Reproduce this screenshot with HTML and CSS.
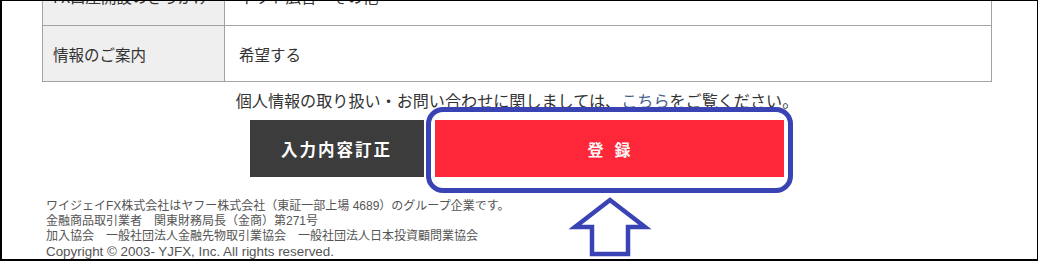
FILE: index.html
```html
<!DOCTYPE html>
<html lang="ja">
<head>
<meta charset="utf-8">
<title>確認画面</title>
<link rel="stylesheet" href="styles.css">
</head>
<body>
<div class="frame">
  <div class="content">
    <div class="info">
      <div class="row row-cut">
        <div class="label">FX口座開設のきっかけ</div>
        <div class="value">ネット広告・その他</div>
      </div>
      <div class="row">
        <div class="label">情報のご案内</div>
        <div class="value">希望する</div>
      </div>
    </div>
    <p class="notice">個人情報の取り扱い・お問い合わせに関しましては、<a href="#" class="link">こちら</a>をご覧ください。</p>
    <div class="buttons">
      <button class="btn btn-back">入力内容訂正</button>
      <div class="submit-wrap">
        <button class="btn btn-submit">登録</button>
        <span class="highlight"></span>
      </div>
    </div>
  </div>
  <div class="footer">
    <p>ワイジェイFX株式会社はヤフー株式会社（東証一部上場 4689）のグループ企業です。</p>
    <p>金融商品取引業者　関東財務局長（金商）第271号</p>
    <p>加入協会　一般社団法人金融先物取引業協会　一般社団法人日本投資顧問業協会</p>
    <p class="copy">Copyright © 2003- YJFX, Inc. All rights reserved.</p>
  </div>
  <svg class="arrow" width="90" height="66" viewBox="0 0 90 66" aria-hidden="true">
    <polygon points="45,3 10,30 27,30 27,57 63,57 63,30 80,30" fill="none" stroke="#3a43b4" stroke-width="4.5" stroke-linejoin="miter"/>
  </svg>
</div>
</body>
</html>
```
FILE: styles.css
```css
html, body {
  margin: 0;
  padding: 0;
  background: #ffffff;
}
body {
  font-family: "Noto Sans CJK JP", "Liberation Sans", sans-serif;
  color: #333333;
}
.frame {
  position: relative;
  box-sizing: border-box;
  width: 1038px;
  height: 261px;
  border-top: 1px solid #000;
  border-left: 2px solid #000;
  border-right: 1px solid #000;
  border-bottom: 2px solid #000;
  overflow: hidden;
  background: #fff;
}
.content {
  width: 950px;
  margin-left: 40px;
}
.info {
  margin-top: -32px;
  border-left: 1px solid #a3a3a3;
  border-right: 1px solid #a3a3a3;
  border-bottom: 1px solid #a3a3a3;
}
.row {
  display: grid;
  grid-template-columns: 182px 1fr;
  height: 56px;
  box-sizing: border-box;
  border-top: 1px solid #a3a3a3;
}
.label {
  background: #efefef;
  border-right: 1px solid #a3a3a3;
  padding-left: 10px;
  display: flex;
  align-items: center;
  font-size: 15.5px;
  line-height: 20px;
}
.value {
  padding-left: 14px;
  display: flex;
  align-items: center;
  font-size: 15.5px;
  line-height: 20px;
}
.row-cut .label,
.row-cut .value {
  padding-bottom: 4px;
}
.notice {
  margin: 8px 0 0;
  text-align: center;
  font-size: 16.1px;
  line-height: 20px;
  color: #333;
  white-space: nowrap;
}
.link {
  color: #45608a;
  text-decoration: none;
}
.buttons {
  display: flex;
  justify-content: center;
  gap: 11px;
  margin-top: 10px;
  margin-left: -1px;
}
.btn {
  border: none;
  margin: 0;
  height: 57px;
  font-family: "Noto Sans CJK JP", sans-serif;
  font-weight: bold;
  color: #fff;
  font-size: 16px;
  padding: 0;
  cursor: pointer;
}
.btn-back {
  width: 174px;
  background: #3c3c3c;
  letter-spacing: 2px;
  font-size: 16.5px;
}
.submit-wrap {
  position: relative;
  width: 349px;
  height: 57px;
}
.btn-submit {
  width: 100%;
  background: #fe2639;
  letter-spacing: 11px;
  padding-left: 11px;
  color: #fbf6f6;
}
.highlight {
  position: absolute;
  top: -13px;
  left: -9px;
  right: -9px;
  bottom: -16px;
  border: 5px solid #3a43b4;
  border-radius: 17px;
  pointer-events: none;
}
.footer {
  margin-top: 22px;
  padding-left: 44px;
  font-family: "Liberation Sans", "Noto Sans CJK JP", sans-serif;
  font-size: 12px;
  line-height: 15px;
  color: #555;
}
.footer p {
  margin: 0;
  white-space: nowrap;
}
.footer .copy {
  font-size: 13.4px;
}
.arrow {
  position: absolute;
  left: 563px;
  top: 196px;
}
```
